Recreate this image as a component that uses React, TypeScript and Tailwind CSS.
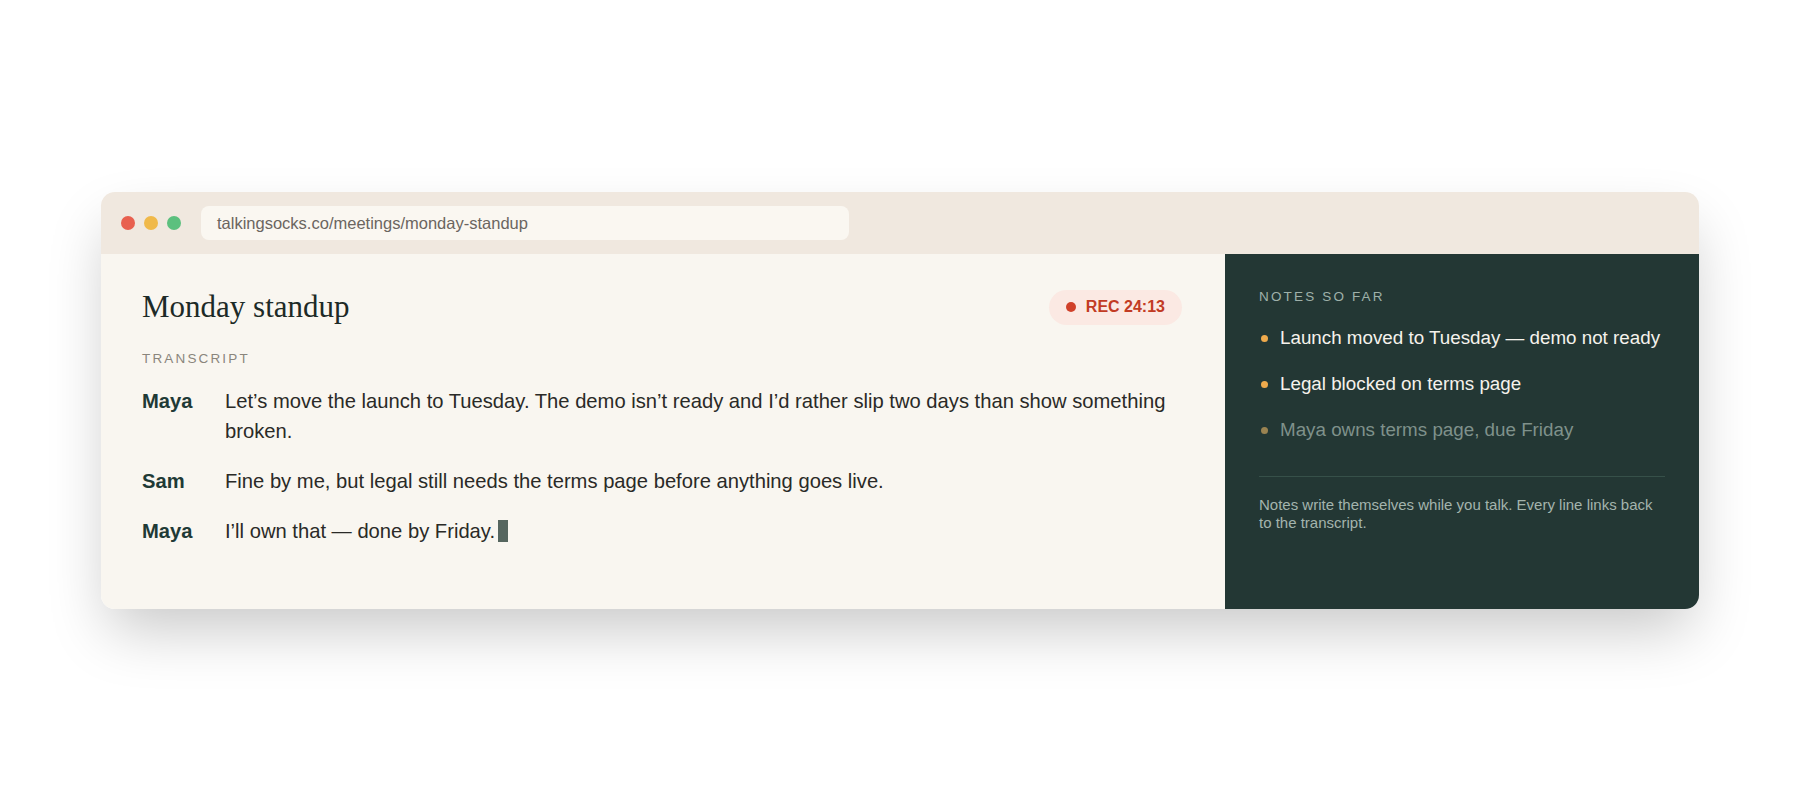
import React from 'react';

const sans = { fontFamily: '"Liberation Sans", Arial, sans-serif' };

const transcript = [
  {
    speaker: 'Maya',
    text: 'Let’s move the launch to Tuesday. The demo isn’t ready and I’d rather slip two days than show something broken.',
  },
  { speaker: 'Sam', text: 'Fine by me, but legal still needs the terms page before anything goes live.' },
  { speaker: 'Maya', text: 'I’ll own that — done by Friday.', live: true },
];

const notes = [
  { text: 'Launch moved to Tuesday — demo not ready' },
  { text: 'Legal blocked on terms page' },
  { text: 'Maya owns terms page, due Friday', pending: true },
];

export default function App() {
  return (
    <div className="min-h-[800px] w-full bg-white pt-[192px]" style={sans}>
      <div className="mx-auto flex w-[1598px] flex-col overflow-hidden rounded-[14px] shadow-[0_28px_60px_-8px_rgba(0,0,0,0.22)]">
        {/* browser chrome */}
        <div className="flex h-[62px] items-center gap-[20px] bg-[#f0e8df] px-[20px]">
          <div className="flex items-center gap-[9px]">
            <span className="h-[14px] w-[14px] rounded-full bg-[#e8604f]" />
            <span className="h-[14px] w-[14px] rounded-full bg-[#f0b94a]" />
            <span className="h-[14px] w-[14px] rounded-full bg-[#5cc07e]" />
          </div>
          <div className="flex h-[34px] w-[648px] items-center rounded-[8px] bg-[#faf7f1] px-4 text-[16.5px] text-[#6b6560]">
            talkingsocks.co/meetings/monday-standup
          </div>
        </div>

        <div className="flex">
          {/* transcript */}
          <div className="flex-1 bg-[#f9f6f0] pb-[63px] pl-[41px] pr-[43px] pt-[35px]">
            <div className="flex items-center justify-between">
              <h1
                className="text-[31px] leading-[36px] text-[#1d2a27]"
                style={{ fontFamily: '"Liberation Serif", "DejaVu Serif", serif' }}
              >
                Monday standup
              </h1>
              <div className="flex h-[35px] items-center gap-[10px] rounded-full bg-[#fbe9e3] px-[17px] text-[16px] font-bold text-[#c23b24]">
                <span className="h-[10px] w-[10px] rounded-full bg-[#d0412a]" />
                REC 24:13
              </div>
            </div>

            <div className="mt-[25px] text-[13.5px] leading-[18px] tracking-[0.16em] text-[#8a857c]">TRANSCRIPT</div>

            <div className="mt-[18px] flex flex-col gap-[20px]">
              {transcript.map((line, i) => (
                <div key={i} className="flex text-[20.2px] leading-[30px]">
                  <div className="w-[83px] shrink-0 font-bold text-[#1f3a36]">{line.speaker}</div>
                  <div className="text-[#2a2a27]">
                    {line.text}
                    {line.live && (
                      <span className="ml-[3px] inline-block h-[22px] w-[10px] translate-y-[4px] bg-[#56665f]" />
                    )}
                  </div>
                </div>
              ))}
            </div>
          </div>

          {/* notes */}
          <div className="w-[474px] shrink-0 bg-[#233734] px-[34px] pt-[34px]">
            <div className="text-[13.5px] leading-[18px] tracking-[0.16em] text-[#9fb1aa]">NOTES SO FAR</div>
            <ul className="mt-[18px] flex flex-col gap-[18px]">
              {notes.map((n, i) => (
                <li
                  key={i}
                  className="flex items-center gap-[12px] whitespace-nowrap pl-[2px] text-[18.8px] leading-[28px]"
                >
                  <span
                    className={
                      n.pending
                        ? 'h-[7px] w-[7px] shrink-0 rounded-full bg-[#9a8351]'
                        : 'h-[7px] w-[7px] shrink-0 rounded-full bg-[#eeaa4c]'
                    }
                  />
                  <span className={n.pending ? 'text-[#7f918b]' : 'text-[#f5f2ec]'}>{n.text}</span>
                </li>
              ))}
            </ul>
            <div className="mt-[32px] h-px bg-[#365049]" />
            <p className="mt-[19px] text-[15px] leading-[18px] text-[#a3b4ad]">
              Notes write themselves while you talk. Every line links back to the transcript.
            </p>
          </div>
        </div>
      </div>
    </div>
  );
}
